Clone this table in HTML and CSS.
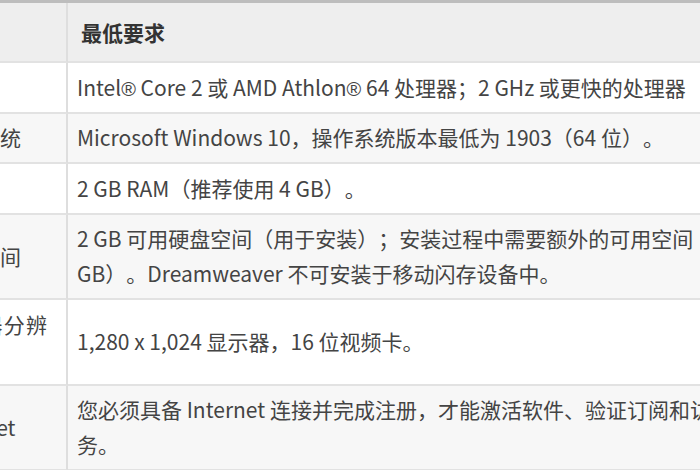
FILE: index.html
```html
<!DOCTYPE html>
<html lang="zh-CN">
<head>
<meta charset="utf-8">
<title>系统要求</title>
<link rel="stylesheet" href="styles.css">
</head>
<body>
<table class="req">
  <colgroup><col class="col-name"><col class="col-value"></colgroup>
  <thead>
    <tr class="head"><th class="name"></th><th class="value">最低要求</th></tr>
  </thead>
  <tbody>
    <tr class="odd"><td class="name">处理器</td><td class="value">Intel<span class="reg">®</span> Core 2 或 AMD Athlon<span class="reg">®</span> 64 处理器；2 GHz 或更快的处理器</td></tr>
    <tr class="even"><td class="name">操作系统</td><td class="value">Microsoft Windows 10，操作系统版本最低为 1903（64 位）。</td></tr>
    <tr class="odd"><td class="name">RAM</td><td class="value">2 GB RAM（推荐使用 4 GB）。</td></tr>
    <tr class="even"><td class="name">硬盘空间</td><td class="value">2 GB 可用硬盘空间（用于安装）；安装过程中需要额外的可用空间（2<br>GB）。Dreamweaver 不可安装于移动闪存设备中。</td></tr>
    <tr class="odd"><td class="name">显示器分辨率</td><td class="value">1,280 x 1,024 显示器，16 位视频卡。</td></tr>
    <tr class="even"><td class="name">Internet</td><td class="value">您必须具备 Internet 连接并完成注册，才能激活软件、验证订阅和访问在线服<br>务。</td></tr>
  </tbody>
</table>
</body>
</html>
```
FILE: styles.css
```css
html, body {
  margin: 0;
  padding: 0;
  background: #ffffff;
  overflow: hidden;
}

body {
  width: 700px;
  height: 470px;
  font-family: "Noto Sans CJK SC", "Noto Sans", sans-serif;
  font-size: 21px;
  line-height: 35px;
  color: #444444;
  text-spacing-trim: space-all;
}

.req {
  margin-left: -73px;
  border-collapse: separate;
  border-spacing: 0;
  border-top: 3px solid #bdbdbd;
  table-layout: fixed;
  width: 900px;
}

.col-name { width: 141px; }
.col-value { width: 759px; }

.req th,
.req td {
  border-bottom: 2px solid #e2e2e2;
  vertical-align: middle;
  text-align: left;
  padding: 6.75px 10px 6.75px 9px;
}

.req .name {
  padding-left: 10px;
  padding-right: 19px;
  border-right: 2px solid #dedede;
  text-align: justify;
}

.reg {
  font-family: "Liberation Sans", sans-serif;
  font-size: 0.95em;
  line-height: 0;
}

.head th {
  background: #eeeeee;
  padding-top: 12px;
  padding-bottom: 11px;
  font-weight: bold;
  color: #333333;
}

.head .value {
  padding-left: 13px;
}

.odd td { background: #ffffff; }
.even td { background: #f7f7f7; }
```
